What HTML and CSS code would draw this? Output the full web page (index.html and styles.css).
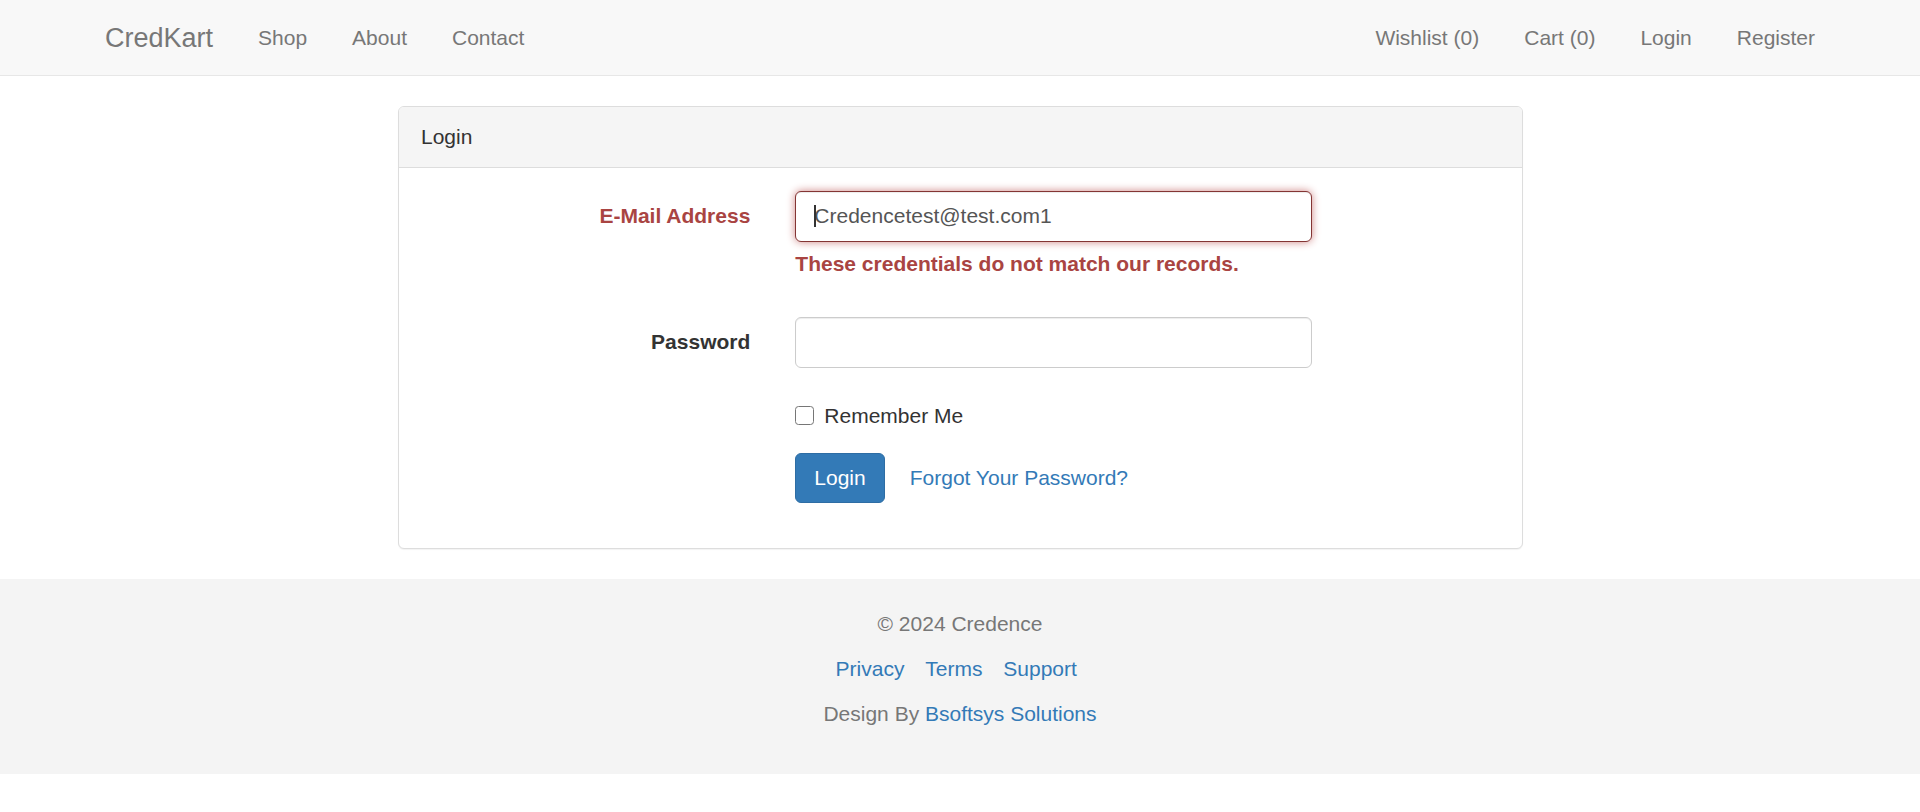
FILE: index.html
```html
<!DOCTYPE html>
<html lang="en">
<head>
<meta charset="utf-8">
<title>CredKart - Login</title>
<link rel="stylesheet" href="styles.css">
</head>
<body>
<nav class="navbar">
  <div class="container nav-inner">
    <a class="brand" href="#">CredKart</a>
    <ul class="nav">
      <li><a href="#">Shop</a></li>
      <li><a href="#">About</a></li>
      <li><a href="#">Contact</a></li>
    </ul>
    <ul class="nav nav-right">
      <li><a href="#">Wishlist (0)</a></li>
      <li><a href="#">Cart (0)</a></li>
      <li><a href="#">Login</a></li>
      <li><a href="#">Register</a></li>
    </ul>
  </div>
</nav>

<main class="container">
  <div class="row">
    <div class="panel-col">
      <div class="panel">
        <div class="panel-heading">Login</div>
        <div class="panel-body">
          <form class="form">
            <div class="form-row has-error">
              <label class="control-label" for="email">E-Mail Address</label>
              <div class="field">
                <div class="input-wrap">
                  <input id="email" class="form-control" type="email" value="Credencetest@test.com1">
                  <span class="caret"></span>
                </div>
                <span class="help-block"><strong>These credentials do not match our records.</strong></span>
              </div>
            </div>
            <div class="form-row">
              <label class="control-label" for="password">Password</label>
              <div class="field">
                <input id="password" class="form-control" type="password">
              </div>
            </div>
            <div class="form-row">
              <div class="field">
                <label class="checkbox"><input type="checkbox" class="check"> Remember Me</label>
              </div>
            </div>
            <div class="form-row form-row-wide">
              <div class="field actions">
                <button type="button" class="btn btn-primary">Login</button>
                <a class="btn btn-link" href="#">Forgot Your Password?</a>
              </div>
            </div>
          </form>
        </div>
      </div>
    </div>
  </div>
</main>

<footer class="footer">
  <p class="muted">© 2024 Credence</p>
  <p class="links"><a href="#">Privacy</a> <a href="#">Terms</a> <a href="#">Support</a></p>
  <p class="muted">Design By <a href="#">Bsoftsys Solutions</a></p>
</footer>
</body>
</html>
```

FILE: styles.css
```css
* { box-sizing: border-box; }

html, body {
  margin: 0;
  padding: 0;
}

body {
  font-family: "Liberation Sans", Arial, Helvetica, sans-serif;
  font-size: 21px;
  line-height: 30px;
  color: #333;
  background: #fff;
}

a { color: #337ab7; text-decoration: none; }

.container {
  width: 1755px;
  margin: 0 auto;
  padding: 0 22.5px;
}

.row {
  margin: 0 -22.5px;
}

/* Navbar */
.navbar {
  background: #f8f8f8;
  border-bottom: 1px solid #e7e7e7;
  margin-bottom: 30px;
}

.nav-inner {
  display: flex;
  align-items: stretch;
  height: 75px;
}

.brand {
  margin-left: -22.5px;
  padding: 22.5px;
  font-size: 27px;
  line-height: 30px;
  color: #777;
}

.nav {
  display: flex;
  list-style: none;
  margin: 0;
  padding: 0;
}

.nav a {
  display: block;
  padding: 22.5px;
  line-height: 30px;
  color: #777;
}

.nav-right {
  margin-left: auto;
  margin-right: -22.5px;
}

/* Panel */
.panel-col {
  width: 66.6667%;
  margin-left: 16.6667%;
  padding: 0 22.5px;
}

.panel {
  border: 1px solid #ddd;
  border-radius: 6px;
  background: #fff;
  box-shadow: 0 1px 1px rgba(0, 0, 0, 0.05);
  margin-bottom: 30px;
}

.panel-heading {
  background: #f5f5f5;
  border-bottom: 1px solid #ddd;
  border-radius: 5px 5px 0 0;
  padding: 15px 22.5px;
  color: #333;
}

.panel-body {
  padding: 22.5px;
}

.form { margin: 0; }

.form-row {
  display: grid;
  grid-template-columns: 33.3333% 50%;
  margin: 0 -22.5px 22.5px;
}

.form-row-wide {
  grid-template-columns: 33.3333% 66.6667%;
}

.control-label {
  grid-column: 1;
  padding: 10.5px 22.5px 0;
  text-align: right;
  font-weight: bold;
}

.field {
  grid-column: 2;
  padding: 0 22.5px;
}

.input-wrap { position: relative; }

.form-control {
  display: block;
  width: 100%;
  height: 51px;
  padding: 9px 18px;
  font-family: inherit;
  font-size: 21px;
  line-height: 30px;
  color: #555;
  background: #fff;
  border: 1px solid #ccc;
  border-radius: 6px;
  box-shadow: inset 0 1px 1px rgba(0, 0, 0, 0.075);
  outline: none;
}

.has-error .control-label,
.has-error .help-block { color: #a94442; }

.has-error .form-control {
  border-color: #843534;
  box-shadow: inset 0 1px 1px rgba(0, 0, 0, 0.075), 0 0 9px #ce8483;
}

.caret {
  position: absolute;
  left: 19px;
  top: 14px;
  width: 1.5px;
  height: 22px;
  background: #333;
}

.help-block {
  display: block;
  margin: 7.5px 0 15px;
}

.checkbox {
  display: flex;
  align-items: center;
  gap: 10px;
  padding-top: 10.5px;
  min-height: 40.5px;
  line-height: 30px;
  cursor: pointer;
}

.check {
  appearance: none;
  -webkit-appearance: none;
  width: 19px;
  height: 19px;
  margin: 0;
  border: 1.5px solid #767676;
  border-radius: 3.5px;
  background: #fff;
}

.actions {
  display: flex;
  align-items: center;
  gap: 6px;
}

.btn {
  display: inline-block;
  padding: 9px 18px;
  font-family: inherit;
  font-size: 21px;
  line-height: 30px;
  border: 1px solid transparent;
  border-radius: 6px;
  cursor: pointer;
}

.btn-primary {
  color: #fff;
  background: #337ab7;
  border-color: #2e6da4;
}

.btn-link {
  color: #337ab7;
  background: transparent;
}

/* Footer */
.footer {
  background: #f4f4f4;
  padding: 30px 0;
  text-align: center;
}

.footer p {
  margin: 0 0 15px;
}

.muted { color: #777; }

.links a {
  margin: 0 11.25px 0 3.75px;
}
```
